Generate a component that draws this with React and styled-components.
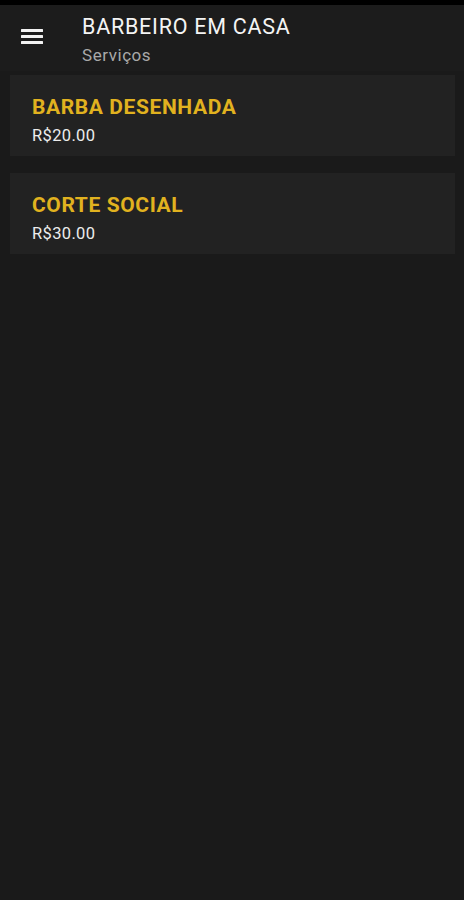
import React from "react";
import styled, { createGlobalStyle } from "styled-components";

const Global = createGlobalStyle`
  html, body { margin: 0; padding: 0; background: #1a1a1a; }
  body { font-family: Roboto, "Noto Sans", sans-serif; }
  * { box-sizing: border-box; }
`;

const Screen = styled.div`
  width: 464px;
  min-height: 900px;
  background: #1a1a1a;
  display: flex;
  flex-direction: column;
`;

const StatusStrip = styled.div`
  height: 5px;
  background: #000;
`;

const Header = styled.header`
  height: 66px;
  background: #1c1c1c;
  display: flex;
  align-items: flex-start;
  padding: 0 0 0 21px;
`;

const MenuButton = styled.button`
  width: 22px;
  height: 15px;
  margin-top: 24px;
  padding: 0;
  border: 0;
  background: none;
  display: flex;
  flex-direction: column;
  justify-content: space-between;
  cursor: pointer;
`;

const MenuBar = styled.span`
  display: block;
  height: 3px;
  width: 22px;
  background: #f2f2f2;
  border-radius: 0.5px;
`;

const Titles = styled.div`
  margin-left: 39px;
  padding-top: 10px;
  display: flex;
  flex-direction: column;
`;

const Title = styled.h1`
  margin: 0;
  font-size: 21.5px;
  line-height: 24px;
  font-weight: 400;
  letter-spacing: 0.75px;
  color: #f4f4f4;
`;

const Subtitle = styled.div`
  margin-top: 6px;
  font-size: 17px;
  line-height: 20px;
  letter-spacing: 0.55px;
  color: #a9a9a9;
`;

const List = styled.main`
  display: flex;
  flex-direction: column;
  gap: 17px;
  padding: 4px 9px 0 10px;
`;

const Card = styled.div`
  background: #222222;
  padding: 20px 22px 10px;
  display: flex;
  flex-direction: column;
  gap: 7px;
`;

const ServiceName = styled.div`
  font-size: 21px;
  line-height: 24px;
  font-weight: 700;
  letter-spacing: 0.6px;
  color: #e1b21f;
`;

const Price = styled.div`
  font-size: 16.5px;
  line-height: 20px;
  letter-spacing: 0.35px;
  color: #ececec;
`;

const services = [
  { name: "BARBA DESENHADA", price: "R$20.00" },
  { name: "CORTE SOCIAL", price: "R$30.00" },
];

export default function App() {
  return (
    <>
      <Global />
      <Screen>
        <StatusStrip />
        <Header>
          <MenuButton aria-label="menu">
            <MenuBar />
            <MenuBar />
            <MenuBar />
          </MenuButton>
          <Titles>
            <Title>BARBEIRO EM CASA</Title>
            <Subtitle>Serviços</Subtitle>
          </Titles>
        </Header>
        <List>
          {services.map((s) => (
            <Card key={s.name}>
              <ServiceName>{s.name}</ServiceName>
              <Price>{s.price}</Price>
            </Card>
          ))}
        </List>
      </Screen>
    </>
  );
}
